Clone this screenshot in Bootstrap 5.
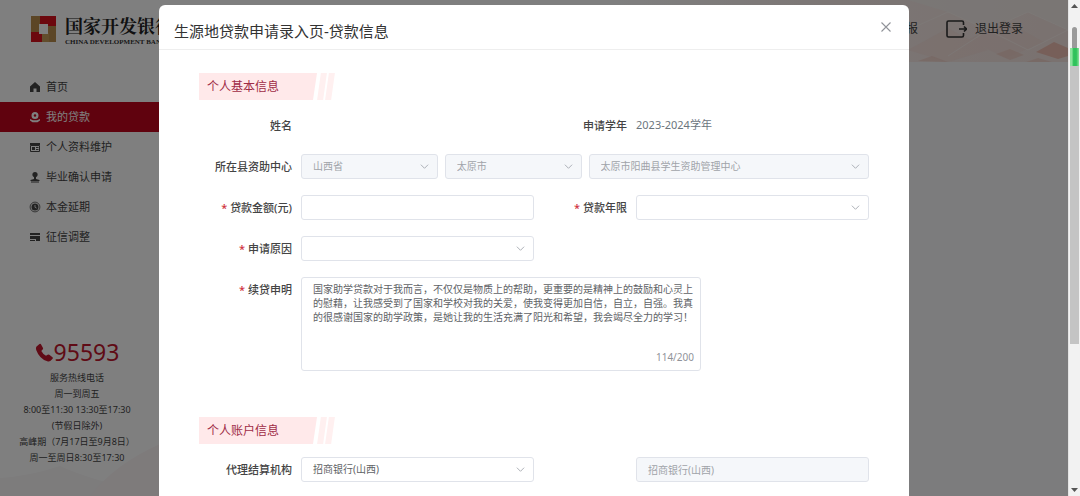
<!DOCTYPE html>
<html lang="zh-CN">
<head>
<meta charset="utf-8">
<meta name="viewport" content="width=device-width, initial-scale=1">
<title>生源地贷款申请录入页</title>
<link href="https://cdn.jsdelivr.net/npm/bootstrap@5.3.0/dist/css/bootstrap.min.css" rel="stylesheet">
<style>
  body { font-family: "Noto Sans", "Noto Sans CJK SC", sans-serif; font-size: 11px; color: #444; background: #f8f8fb; }
  a { color: inherit; text-decoration: none; }

  /* top bar */
  .topbar { height: 62px; padding: 0 45px 4px 29px; background: #fff; }
  .topbar-art { width: 460px; z-index: 0; }
  .brand-zh { font-family: "Noto Serif CJK SC", "Noto Sans CJK SC", serif; font-weight: 700; font-size: 18px; line-height: 26px; color: #222; }
  .brand-en { font-family: "Liberation Serif", serif; font-weight: 700; font-size: 7px; line-height: 8px; color: #333; }
  .topbar-link { font-size: 12px; z-index: 1; }

  /* sidebar */
  .sidebar { width: 160px; background: #fff; }
  .side-nav { padding-top: 10px; }
  .side-link { height: 30px; padding-left: 29px; gap: 5px; color: #444; }
  .side-link.active { background: #c0041c; color: #fff; }
  .hotline { font-size: 9px; line-height: 16px; padding: 0 6px 30px 0; }
  .hotline-number { font-size: 23px; line-height: 34px; padding-bottom: 1px; color: #c0162c; }
  .side-wave { height: 60px; }

  /* dialog */
  .apply-backdrop { background: rgba(0, 0, 0, .5); }
  .apply-dialog { max-width: 750px; margin: 5px auto 0; }
  .apply-dialog .modal-content { border: 0; border-radius: 6px; min-height: 560px; }
  .apply-dialog .modal-header { height: 45px; padding: 8px 15px 0; border-color: #eee; }
  .apply-dialog .modal-title { font-size: 15px; line-height: 24px; font-weight: 400; color: #333; }
  .close-btn { border: 0; background: none; padding: 2px; color: #909399; margin-bottom: 8px; }
  .apply-dialog .modal-body { padding: 23px 40px; }

  .section-tag { height: 27px; margin-bottom: 13px; gap: 2px; }
  .section-tag h2 { font-size: 12px; line-height: 27px; font-weight: 400; width: 118px; padding-left: 8px; margin: 0; color: #a02c46; background: #ffe9ea; clip-path: polygon(0 0, 100% 0, calc(100% - 4px) 100%, 0 100%); }
  .section-tag i { width: 6px; background: #fff0f0; transform: skewX(-8deg); }
  .section-gap { margin-top: 46px; }

  .line { margin-bottom: 16px; min-height: 25px; }
  .line label, .line .term { flex: 0 0 102px; padding-right: 9px; line-height: 25px; text-align: right; color: #444; font-weight: 500; }
  .required::before { content: "* "; color: #d0323c; }
  .line .form-control, .line .form-select { height: 25px; min-height: 25px; padding: 0 11px; font-size: 10px; line-height: 23px; border-radius: 3px; border-color: #e0e3ea; color: #606266; }
  .line .form-select { background-size: 9px 9px; background-position: right 8px center; background-image: url("data:image/svg+xml,%3Csvg xmlns='http://www.w3.org/2000/svg' viewBox='0 0 10 10'%3E%3Cpath d='M1 3l4 4 4-4' fill='none' stroke='%23a4a8b0' stroke-width='1'/%3E%3C/svg%3E"); }
  .line .form-control:disabled, .line .form-select:disabled { background-color: #f5f7fa; color: #a0a3a9; opacity: 1; }
  .centers { display: grid; grid-template-columns: 137fr 137fr 281fr; gap: 7px; }
  .statement { width: 400px; }
  .line .statement textarea { height: 94px; padding: 4px 2px 20px 11px; line-height: 14px; resize: none; overflow: hidden; }
  .counter { right: 7px; bottom: 7px; font-size: 10px; line-height: 14px; color: #909399; }

  /* window scroll strip */
  .scroll-strip { width: 12px; background: #f2f2f2; border-left: 1px solid #e4e4e4; padding: 4px 1px; }
  .scroll-thumb { flex: 0 0 65%; margin-top: 19px; background: #c4c4c4; }
  .scroll-grip { width: 5px; height: 21px; border-radius: 3px 3px 0 0; background: #9a9a9a; margin-left: 2px; }
  .scroll-mark { height: 18px; background: linear-gradient(90deg, #8be39b 20%, #2fc25b 40% 70%, #8be39b); }
  .scroll-head { background: #f2f2f2; }
</style>
</head>
<body>
<div class="d-flex vh-100 overflow-hidden">
  <div class="flex-grow-1 position-relative overflow-hidden d-flex flex-column">

    <header class="topbar d-flex align-items-center position-relative flex-shrink-0">
      <svg class="topbar-art position-absolute top-0 end-0 h-100" viewBox="0 0 460 62" preserveAspectRatio="none" aria-hidden="true">
        <defs>
          <linearGradient id="blush" x1="0" x2="1"><stop offset="0" stop-color="#fff"/><stop offset=".5" stop-color="#f8ece9"/><stop offset="1" stop-color="#f4e4e0"/></linearGradient>
        </defs>
        <rect width="460" height="62" fill="url(#blush)"/>
        <path d="M300 0h160v30L420 12 380 30 340 12z" fill="#f4efec" opacity=".7"/>
        <path d="M300 50l40-22 40 22-40 12zM360 40l36-20 40 22-38 16z" fill="#f6dcd6" opacity=".5"/>
        <path d="M428 52l18-10 14 6v8l-10 3z" fill="#eebfb2"/>
        <path d="M388 54l14-5 14 6-14 5zM310 61l14-5 16 6zM418 62l12-4 14 4z" fill="#efcabf" opacity=".6"/>
        <path d="M300 30l40-18 40 18 40-18 40 18M340 56l40-26 40 20 40-20" fill="none" stroke="#fbf3f0" stroke-opacity=".7"/>
      </svg>
      <a href="#" class="d-flex align-items-center gap-2 me-auto">
        <svg width="28" height="28" viewBox="0 0 28 28" aria-hidden="true">
          <path d="M2 1h9v18H2z" fill="#b98d4c"/><path d="M11 1h16v10H11z" fill="#d8101c"/>
          <path d="M18 11h9v16h-9z" fill="#b98d4c"/><path d="M2 17h11v10H2z" fill="#d8101c"/>
          <path d="M13 18h7v9h-7z" fill="#c59a58"/><path d="M10 9h9v10h-9z" fill="#fff"/>
        </svg>
        <span class="d-flex flex-column text-nowrap"><span class="brand-zh">国家开发银行</span><span class="brand-en">CHINA DEVELOPMENT BANK</span></span>
      </a>
      <a href="#" class="topbar-link">报</a>
      <a href="#" class="topbar-link d-flex align-items-center ms-4 ps-1 gap-2">
        <svg width="21" height="18" viewBox="0 0 21 18" fill="none" stroke="#333" stroke-width="1.6" aria-hidden="true"><path d="M17.500 5V2.500Q17.500 1 16 1H2.500Q1 1 1 2.500v13Q1 17 2.500 17H16q1.500 0 1.500-1.500V13M13 9h7M18 6.500L20.500 9 18 11.500"/></svg>
        退出登录
      </a>
    </header>

    <aside class="sidebar flex-grow-1 d-flex flex-column position-relative">
      <svg class="side-wave position-absolute bottom-0 start-0 w-100" viewBox="0 0 160 60" preserveAspectRatio="none" aria-hidden="true">
        <path d="M0 42Q30 40 60 30 90 44 160 60H0z" fill="#faf8f9"/><path d="M90 60Q115 28 160 8V60z" fill="#fcf6f7"/>
      </svg>
      <nav class="side-nav nav flex-column">
        <a href="#" class="side-link d-flex align-items-center">
          <svg width="12" height="12" viewBox="0 0 12 12" fill="currentColor" aria-hidden="true"><path d="M6 1L1 5.500V11h3.500V7.500h3V11H11V5.500z"/></svg>首页</a>
        <a href="#" class="side-link active d-flex align-items-center" aria-current="page">
          <svg width="12" height="12" viewBox="0 0 12 12" fill="currentColor" aria-hidden="true"><path fill-rule="evenodd" d="M6 1a3.500 3.500 0 1 1 0 7 3.500 3.500 0 0 1 0-7zm0 2.200a1.300 1.300 0 1 0 0 2.600 1.300 1.300 0 0 0 0-2.600z"/><path d="M1 8l3 1.200h4L11 8v1.500L8.500 11.300h-5L1 9.500z"/></svg>我的贷款</a>
        <a href="#" class="side-link d-flex align-items-center">
          <svg width="12" height="12" viewBox="0 0 12 12" aria-hidden="true"><path d="M1 2h10v2H1z" fill="currentColor"/><path d="M1.500 4.500h9v6h-9z" fill="none" stroke="currentColor"/><path d="M3 6h3v3H3zM7 6h2.500v1H7zM7 8h2.500v1H7z" fill="currentColor"/></svg>个人资料维护</a>
        <a href="#" class="side-link d-flex align-items-center">
          <svg width="12" height="12" viewBox="0 0 12 12" fill="currentColor" aria-hidden="true"><circle cx="6" cy="3.500" r="2.600"/><path d="M5 5.500h2V8l3.500 1v1h-9V9L5 8zM2 10.500h8v1H2z"/></svg>毕业确认申请</a>
        <a href="#" class="side-link d-flex align-items-center">
          <svg width="12" height="12" viewBox="0 0 12 12" aria-hidden="true"><circle cx="6" cy="6" r="4.900" fill="none" stroke="currentColor" stroke-width=".8"/><circle cx="6" cy="6" r="3.500" fill="currentColor"/><path d="M6 4v2.300l1.600.8" fill="none" stroke="#fff" stroke-width=".8"/></svg>本金延期</a>
        <a href="#" class="side-link d-flex align-items-center">
          <svg width="12" height="12" viewBox="0 0 12 12" fill="currentColor" aria-hidden="true"><path d="M1 2h10v2H1zM1 5h10v5H7V8H1z"/><path d="M1 9h5v1H1z"/></svg>征信调整</a>
      </nav>
      <div class="hotline mt-auto text-center position-relative text-nowrap">
        <div class="hotline-number d-flex justify-content-center align-items-center">
          <svg width="19" height="19" viewBox="0 0 19 19" fill="currentColor" aria-hidden="true"><path d="M1.500 3.500L4.500 1q1-.5 1.600.4L8 5q.4 1-.4 1.600L6.300 8q1.500 3 4.700 4.700l1.600-1q.9-.5 1.700.1l3.200 2.400q.8.800.1 1.600l-2.300 2.200q-1.200.8-3 .3Q4.500 16 1.200 7 .5 4.700 1.500 3.500z"/></svg>
          <span>95593</span>
        </div>
        <div>服务热线电话</div>
        <div>周一到周五</div>
        <div>8:00至11:30 13:30至17:30</div>
        <div>(节假日除外)</div>
        <div>高峰期（7月17日至9月8日）</div>
        <div>周一至周日8:30至17:30</div>
      </div>
    </aside>

    <div class="modal d-block position-absolute overflow-hidden apply-backdrop" role="dialog" aria-modal="true" aria-labelledby="dlgTitle">
      <div class="modal-dialog apply-dialog">
        <div class="modal-content">
          <div class="modal-header d-flex justify-content-between align-items-center">
            <h1 class="modal-title" id="dlgTitle">生源地贷款申请录入页-贷款信息</h1>
            <button type="button" class="close-btn d-flex" aria-label="关闭"><svg width="12" height="12" viewBox="0 0 12 12" fill="none" stroke="currentColor" stroke-width="1.100"><path d="M1.500 1.500l9 9M10.500 1.500l-9 9"/></svg></button>
          </div>
          <form class="modal-body">
            <div class="section-tag d-flex"><h2>个人基本信息</h2><i></i><i></i></div>

            <div class="row g-0">
              <div class="col-6 line d-flex"><span class="term">姓名</span></div>
              <div class="col-6 line d-flex align-items-center"><span class="term">申请学年</span><span class="text-secondary">2023-2024学年</span></div>
            </div>

            <div class="line d-flex">
              <label for="province">所在县资助中心</label>
              <div class="centers flex-grow-1">
                <select id="province" class="form-select" disabled><option>山西省</option></select>
                <select class="form-select" aria-label="市" disabled><option>太原市</option></select>
                <select class="form-select" aria-label="资助管理中心" disabled><option>太原市阳曲县学生资助管理中心</option></select>
              </div>
            </div>

            <div class="row g-0">
              <div class="col-6 line d-flex"><label for="amount" class="required">贷款金额(元)</label><input id="amount" type="text" class="form-control"></div>
              <div class="col-6 line d-flex"><label for="years" class="required">贷款年限</label><select id="years" class="form-select"><option></option></select></div>
            </div>

            <div class="row g-0">
              <div class="col-6 line d-flex"><label for="reason" class="required">申请原因</label><select id="reason" class="form-select"><option></option></select></div>
            </div>

            <div class="line d-flex mb-0">
              <label for="statement" class="required">续贷申明</label>
              <div class="statement position-relative">
                <textarea id="statement" class="form-control" maxlength="200">国家助学贷款对于我而言，不仅仅是物质上的帮助，更重要的是精神上的鼓励和心灵上的慰藉，让我感受到了国家和学校对我的关爱，使我变得更加自信，自立，自强。我真的很感谢国家的助学政策，是她让我的生活充满了阳光和希望，我会竭尽全力的学习！</textarea>
                <span class="counter position-absolute">114/200</span>
              </div>
            </div>

            <div class="section-tag section-gap d-flex"><h2>个人账户信息</h2><i></i><i></i></div>
            <div class="row g-0">
              <div class="col-6 line d-flex"><label for="agency">代理结算机构</label><select id="agency" class="form-select"><option>招商银行(山西)</option></select></div>
              <div class="col-6 line d-flex"><span class="term"></span><input type="text" class="form-control" aria-label="结算机构名称" value="招商银行(山西)" disabled></div>
            </div>
          </form>
        </div>
      </div>
    </div>
  </div>

  <div class="scroll-strip d-flex flex-column flex-shrink-0" aria-hidden="true">
    <svg class="mx-auto flex-shrink-0" width="7" height="4" viewBox="0 0 7 4"><path d="M0 4l3.500-4L7 4z" fill="#555"/></svg>
    <div class="scroll-thumb"><div class="scroll-head"><div class="scroll-grip"></div></div><div class="scroll-mark"></div></div>
    <svg class="mx-auto mt-auto flex-shrink-0" width="7" height="4" viewBox="0 0 7 4"><path d="M0 0h7L3.500 4z" fill="#555"/></svg>
  </div>
</div>
<script src="https://cdn.jsdelivr.net/npm/bootstrap@5.3.0/dist/js/bootstrap.bundle.min.js"></script>
</body>
</html>
